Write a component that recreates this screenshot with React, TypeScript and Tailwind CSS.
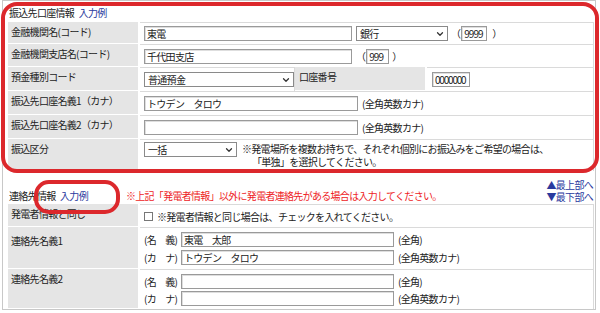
import React from "react";
import { ChevronDown } from "lucide-react";

const Field = ({ w, value = "", className = "" }: { w: string; value?: string; className?: string }) => (
    <div className={`${w} h-[15px] border border-[#9a9a9a] shadow-[inset_1px_1px_0_#dedede] bg-white px-[2px] leading-[13px] text-[#222] ${className}`}>
        {value}
    </div>
);

const Select = ({ w, value }: { w: string; value: string }) => (
    <div className={`${w} h-[15px] border border-[#8a8a8a] bg-white flex items-center justify-between pl-[3px] pr-[2px] leading-[13px] text-[#222]`}>
        <span>{value}</span>
        <ChevronDown className="w-[10px] h-[10px] text-[#333]" strokeWidth={3} />
    </div>
);

const Label = ({ children, w = "w-[130px]" }: { children: React.ReactNode; w?: string }) => (
    <div className={`${w} shrink-0 bg-[#e5e5e5] border-b border-white pl-[3px] pt-[3px] leading-[14px]`}>{children}</div>
);

const Value = ({ children, className = "" }: { children: React.ReactNode; className?: string }) => (
    <div className={`flex-1 ml-[2px] bg-white border-t border-r border-[#dadada] px-[4px] flex items-center ${className}`}>{children}</div>
);

export default function App() {
    return (
        <div className="relative w-[600px] h-[313px] bg-white overflow-hidden text-[10px] tracking-[-0.7px] text-[#222] font-['Noto_Sans_CJK_JP','Noto_Sans',sans-serif]">
            <div className="ml-[2px] mr-[4px] h-[310px] border border-[#c8c8c8] pl-[5px] pr-[1px] pt-[5px]">
                {/* 振込先口座情報 */}
                <div className="h-[16px] leading-[14px] pl-[1px]">
                    振込先口座情報 <span className="text-[#2a3a9e] ml-[3px]">入力例</span>
                </div>
                <div className="flex flex-col">
                    <div className="flex h-[22px]">
                        <Label>金融機関名(コード)</Label>
                        <Value>
                            <Field w="w-[208px]" value="東電" />
                            <div className="ml-[4px]"><Select w="w-[92px]" value="銀行" /></div>
                            <span className="ml-[3px]">（</span>
                            <Field w="w-[26px]" value="9999" className="ml-[1px] tracking-[-1px]" />
                            <span className="ml-[5px]">）</span>
                        </Value>
                    </div>
                    <div className="flex h-[23px]">
                        <Label>金融機関支店名(コード)</Label>
                        <Value>
                            <Field w="w-[208px]" value="千代田支店" />
                            <span className="ml-[4px]">（</span>
                            <Field w="w-[23px]" value="999" className="ml-[1px] tracking-[-1px]" />
                            <span className="ml-[3px]">）</span>
                        </Value>
                    </div>
                    <div className="flex h-[24px]">
                        <Label>預金種別コード</Label>
                        <Value className="!pr-0">
                            <Select w="w-[150px]" value="普通預金" />
                        </Value>
                        <div className="w-[130px] shrink-0 bg-[#e5e5e5] border-b border-white pl-[4px] pt-[3px] leading-[14px]">口座番号</div>
                        <div className="w-[168px] ml-[2px] bg-white border-t border-r border-[#dadada] px-[5px] flex items-center">
                            <Field w="w-[38px]" value="0000000" className="tracking-[-1.2px]" />
                        </div>
                    </div>
                    <div className="flex h-[24px]">
                        <Label>振込先口座名義1（カナ）</Label>
                        <Value>
                            <Field w="w-[214px]" value="トウデン　タロウ" />
                            <span className="ml-[4px]">(全角英数カナ)</span>
                        </Value>
                    </div>
                    <div className="flex h-[24px]">
                        <Label>振込先口座名義2（カナ）</Label>
                        <Value>
                            <Field w="w-[214px]" />
                            <span className="ml-[4px]">(全角英数カナ)</span>
                        </Value>
                    </div>
                    <div className="flex h-[32px]">
                        <Label>振込区分</Label>
                        <Value className="!items-start pt-[2px]">
                            <Select w="w-[93px]" value="一括" />
                            <div className="ml-[5px] leading-[13px]">
                                <div>※発電場所を複数お持ちで、それぞれ個別にお振込みをご希望の場合は、</div>
                                <div className="pl-[10px]">「単独」を選択してください。</div>
                            </div>
                        </Value>
                    </div>
                </div>

                {/* 連絡先情報 */}
                <div className="mt-[9px] flex items-end h-[24px] pb-[1px]">
                    <div className="pl-[1px] leading-[14px]">
                        連絡先情報 <span className="text-[#2a3a9e] ml-[3px]">入力例</span>
                    </div>
                    <div className="ml-[38px] text-[#ee1c25] leading-[14px]">
                        ※上記「発電者情報」以外に発電者連絡先がある場合は入力してください。
                    </div>
                    <div className="ml-auto text-[#2a3a9e] leading-[12px] text-right pr-[1px]">
                        <div>▲最上部へ</div>
                        <div>▼最下部へ</div>
                    </div>
                </div>
                <div className="flex flex-col">
                    <div className="flex h-[23px]">
                        <Label>発電者情報と同じ</Label>
                        <Value>
                            <div className="w-[9px] h-[9px] border border-[#777] bg-white" />
                            <span className="ml-[4px]">※発電者情報と同じ場合は、チェックを入れてください。</span>
                        </Value>
                    </div>
                    <div className="flex h-[42px]">
                        <Label><div className="pt-[4px]">連絡先名義1</div></Label>
                        <Value className="flex-col !items-start justify-center gap-[3px]">
                            <div className="flex items-center">
                                <span className="w-[37px]">(名　義)</span>
                                <Field w="w-[213px]" value="東電　太郎" />
                                <span className="ml-[4px]">(全角)</span>
                            </div>
                            <div className="flex items-center">
                                <span className="w-[37px]">(カ　ナ)</span>
                                <Field w="w-[213px]" value="トウデン　タロウ" />
                                <span className="ml-[4px]">(全角英数カナ)</span>
                            </div>
                        </Value>
                    </div>
                    <div className="flex h-[40px]">
                        <Label>連絡先名義2</Label>
                        <Value className="flex-col !items-start justify-start pt-[4px] gap-[2px]">
                            <div className="flex items-center">
                                <span className="w-[37px]">(名　義)</span>
                                <Field w="w-[213px]" />
                                <span className="ml-[4px]">(全角)</span>
                            </div>
                            <div className="flex items-center">
                                <span className="w-[37px]">(カ　ナ)</span>
                                <Field w="w-[213px]" />
                                <span className="ml-[4px]">(全角英数カナ)</span>
                            </div>
                        </Value>
                    </div>
                </div>
            </div>

            {/* annotation frames */}
            <div className="absolute left-[1px] top-[2px] w-[598px] h-[171px] border-[4px] border-[#dc282c] rounded-[16px]" />
            <div className="absolute left-[34px] top-[180px] w-[86px] h-[34px] border-[4px] border-[#dc282c] rounded-[15px]" />
        </div>
    );
}
